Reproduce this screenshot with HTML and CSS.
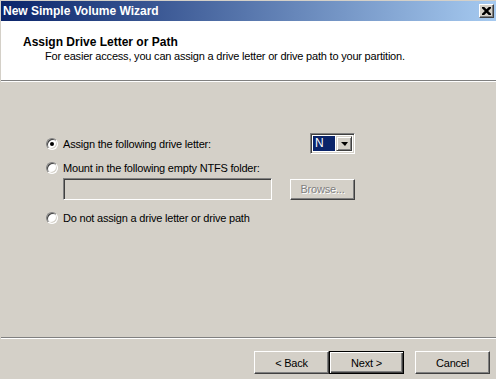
FILE: index.html
```html
<!DOCTYPE html>
<html lang="en">
<head>
    <meta charset="UTF-8" />
    <title>New Simple Volume Wizard</title>
    <link rel="stylesheet" href="styles.css">
</head>
<body>
    <div class="window">
        <div class="titlebar">
            <span class="title">New Simple Volume Wizard</span>
            <button class="close-btn">
                <svg width="8" height="7" viewBox="0 0 8 7">
                    <path d="M0 0h2l2 2 2-2h2v1l-2.5 2.5 2.5 2.5v1h-2l-2-2-2 2h-2v-1l2.5-2.5-2.5-2.5z" fill="#000"/>
                </svg>
            </button>
        </div>

        <div class="header">
            <h1>Assign Drive Letter or Path</h1>
            <p>For easier access, you can assign a drive letter or drive path to your partition.</p>
        </div>

        <div class="content">
            <div class="row first">
                <span class="radio checked"></span>
                <span class="label">Assign the following drive letter:</span>
                <div class="combo">
                    <span class="combo-value"><span class="selected">N</span></span>
                    <span class="combo-arrow"></span>
                </div>
            </div>
            <div class="row second">
                <span class="radio"></span>
                <span class="label">Mount in the following empty NTFS folder:</span>
            </div>
            <div class="row folder">
                <span class="textbox"></span>
                <button class="btn disabled browse">Browse...</button>
            </div>
            <div class="row last">
                <span class="radio"></span>
                <span class="label">Do not assign a drive letter or drive path</span>
            </div>
        </div>

        <div class="footer">
            <button class="btn">&lt; Back</button>
            <button class="btn default">Next &gt;</button>
            <button class="btn cancel">Cancel</button>
        </div>
    </div>
</body>
</html>
```

FILE: styles.css
```css
body {
    margin: 0;
    padding: 0;
    font-family: "Liberation Sans", Arial, sans-serif;
    font-size: 11px;
    letter-spacing: -0.2px;
    color: #000;
    background-color: #d4d0c8;
}
.window {
    width: 496px;
    height: 379px;
    display: flex;
    flex-direction: column;
    box-sizing: border-box;
    border-left: 1px solid #d4d0c8;
    border-top: 1px solid #d4d0c8;
}
.titlebar {
    height: 20px;
    display: flex;
    align-items: center;
    justify-content: space-between;
    padding: 0 2px 0 2px;
    background: linear-gradient(to right, #0a246a, #a6caf0);
}
.title {
    color: #fff;
    font-weight: bold;
    font-size: 12px;
    letter-spacing: 0;
}
.close-btn {
    width: 15px;
    height: 14px;
    padding: 0;
    display: flex;
    align-items: center;
    justify-content: center;
    background-color: #d4d0c8;
    border: 1px solid;
    border-color: #fff #404040 #404040 #fff;
    box-shadow: inset -1px -1px #808080;
}
.close-btn svg {
    width: 9px;
    height: 8px;
}
.header {
    height: 59px;
    background-color: #fff;
    border-bottom: 1px solid #808080;
    box-shadow: 0 1px #fff;
    padding: 0 0 0 22px;
}
.header h1 {
    margin: 14px 0 0 0;
    font-size: 12px;
    font-weight: bold;
    letter-spacing: 0;
}
.header p {
    margin: 1px 0 0 22px;
}
.content {
    flex: 1;
    padding: 52px 141px 0 45px;
    display: flex;
    flex-direction: column;
}
.row {
    display: flex;
    align-items: center;
}
.row.first {
    height: 21px;
}
.row.second {
    height: 20px;
    margin-top: 4px;
}
.row.folder {
    margin: 0 0 0 17px;
    height: 22px;
    justify-content: space-between;
}
.row.last {
    height: 20px;
    margin-top: 8px;
}
.radio {
    width: 12px;
    height: 12px;
    box-sizing: border-box;
    border-radius: 50%;
    border: 1px solid;
    border-color: #808080 #fff #fff #808080;
    background-color: #fff;
    box-shadow: inset 1px 1px #404040, inset -1px -1px #d4d0c8;
    margin-right: 5px;
    display: flex;
    align-items: center;
    justify-content: center;
}
.radio.checked::after {
    content: "";
    width: 4px;
    height: 4px;
    border-radius: 50%;
    background-color: #000;
}
.combo {
    margin-left: auto;
    width: 45px;
    height: 21px;
    box-sizing: border-box;
    display: flex;
    background-color: #fff;
    border: 1px solid;
    border-color: #808080 #fff #fff #808080;
    box-shadow: inset 1px 1px #404040, inset -1px -1px #d4d0c8;
    padding: 2px;
}
.combo-value {
    flex: 1;
    display: flex;
    padding-right: 1px;
}
.selected {
    flex: 1;
    background-color: #0a246a;
    color: #fff;
    padding-left: 2px;
    line-height: 15px;
    font-size: 12px;
}
.combo-arrow {
    width: 16px;
    box-sizing: border-box;
    background-color: #d4d0c8;
    border: 1px solid;
    border-color: #d4d0c8 #404040 #404040 #d4d0c8;
    box-shadow: inset 1px 1px #fff, inset -1px -1px #808080;
    display: flex;
    align-items: center;
    justify-content: center;
}
.combo-arrow::after {
    content: "";
    border-left: 4px solid transparent;
    border-right: 3px solid transparent;
    border-top: 4px solid #000;
    margin-top: 1px;
}
.textbox {
    width: 209px;
    height: 22px;
    box-sizing: border-box;
    border: 1px solid;
    border-color: #808080 #fff #fff #808080;
    box-shadow: inset 1px 1px #404040, inset -1px -1px #d4d0c8;
    background-color: #d4d0c8;
}
.btn {
    width: 75px;
    height: 23px;
    box-sizing: border-box;
    padding: 0;
    font-family: "Liberation Sans", Arial, sans-serif;
    font-size: 11px;
    letter-spacing: -0.2px;
    color: #000;
    background-color: #d4d0c8;
    border: 1px solid;
    border-color: #fff #404040 #404040 #fff;
    box-shadow: inset -1px -1px #808080;
}
.btn.browse {
    width: 65px;
    height: 21px;
}
.btn.disabled {
    color: #808080;
    text-shadow: 1px 1px #fff;
}
.btn.default {
    border: 1px solid #000;
    box-shadow: inset 1px 1px #fff, inset -1px -1px #404040, inset -2px -2px #808080;
}
.btn.cancel {
    margin-left: 11px;
}
.footer {
    height: 42px;
    border-top: 1px solid #808080;
    box-shadow: inset 0 1px #fff;
    display: flex;
    align-items: flex-start;
    padding: 13px 0 0 253px;
    box-sizing: border-box;
}
```
